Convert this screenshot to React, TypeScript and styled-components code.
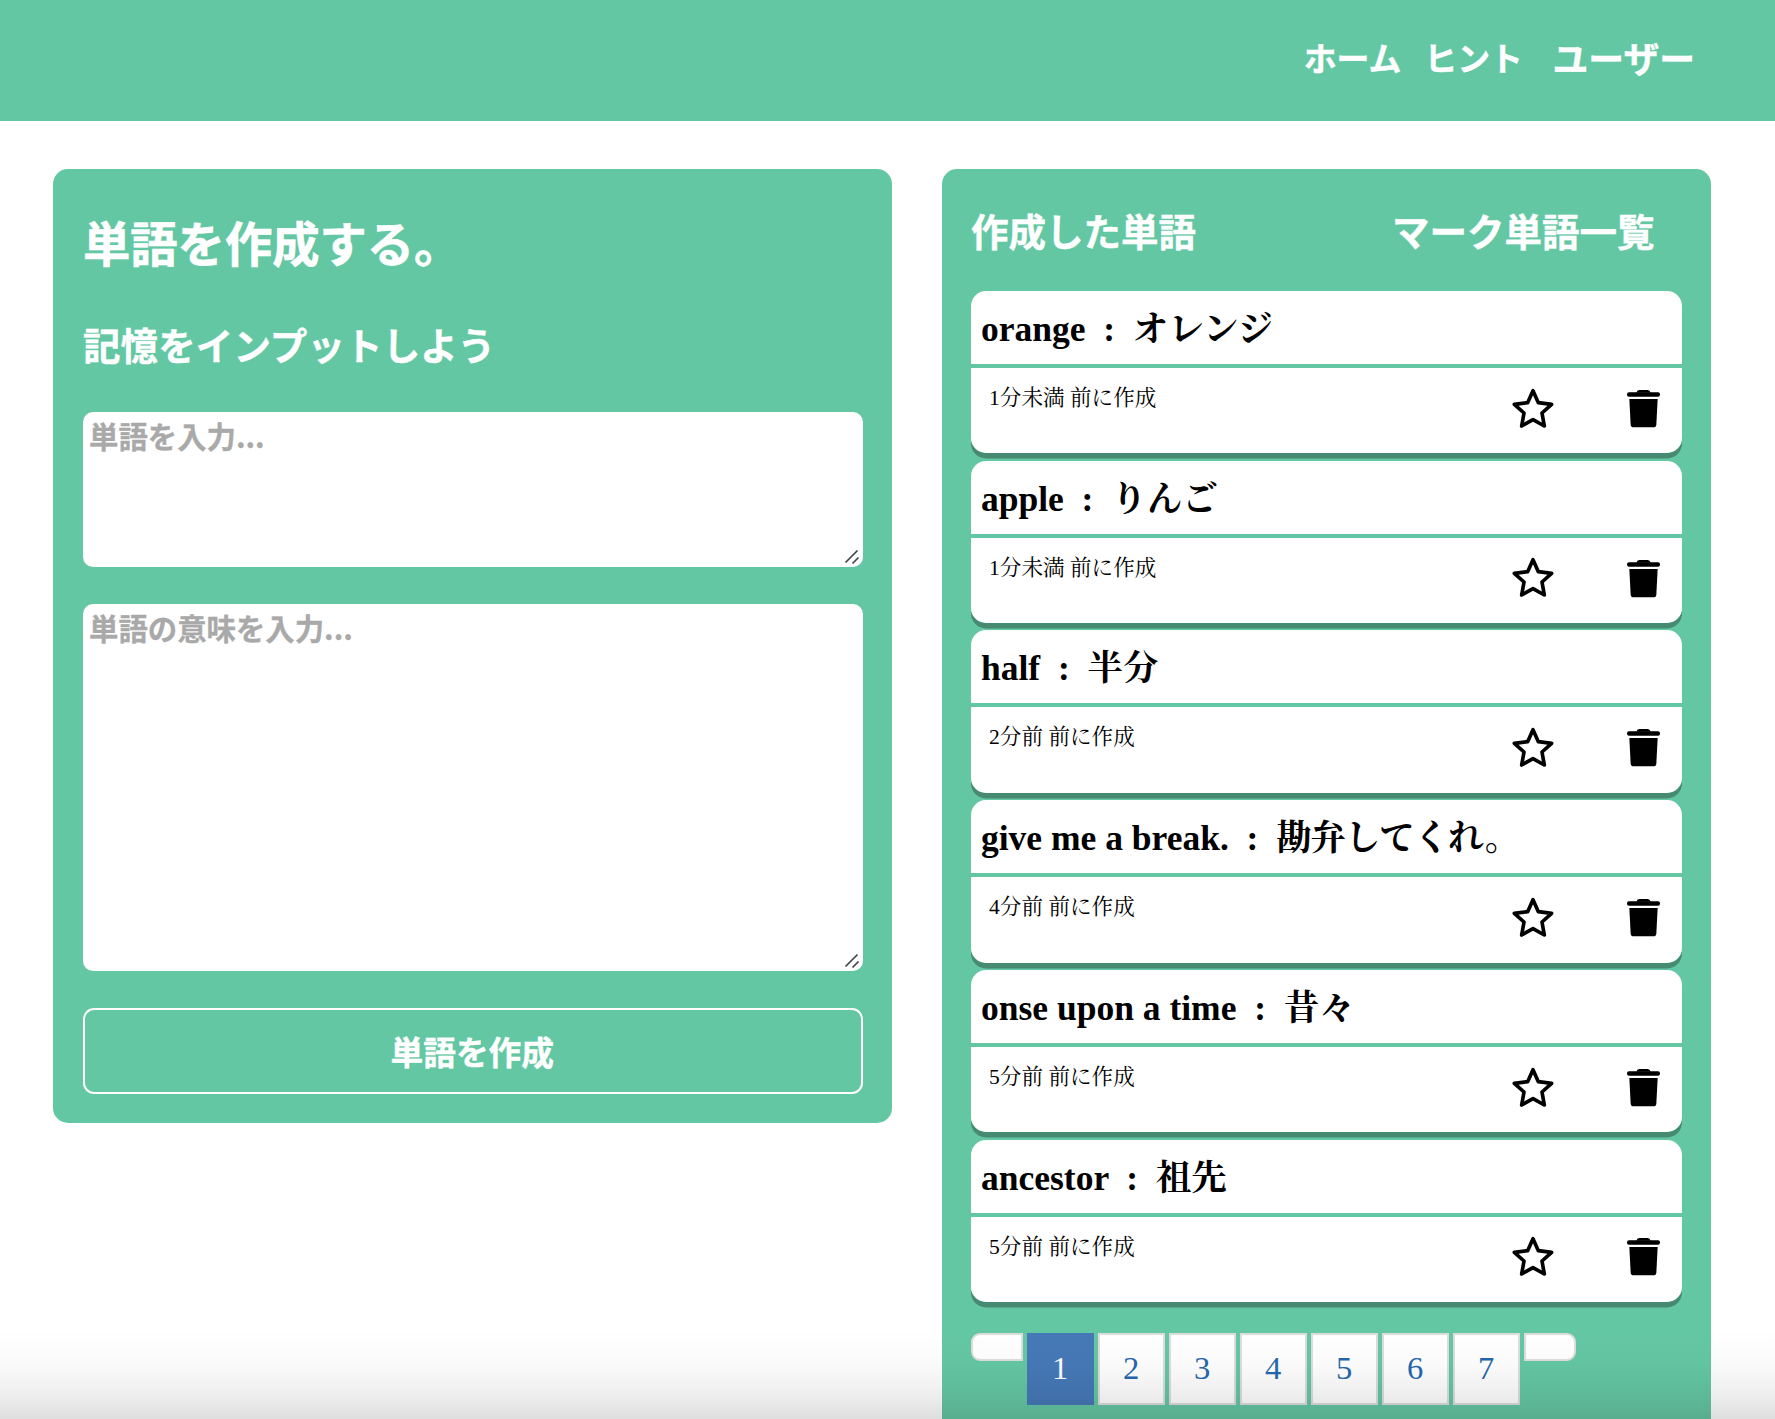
import React from "react";
import styled, { createGlobalStyle } from "styled-components";

const green = "#64c7a4";
const sans = `"Noto Sans CJK JP", "Hiragino Sans", sans-serif`;
const serif = `"Liberation Serif", "Noto Serif CJK JP", "Noto Sans CJK JP", serif`;

const GlobalStyle = createGlobalStyle`
  *, *::before, *::after { box-sizing: border-box; }
  body { margin: 0; background: #fff; font-family: ${serif}; color: #000; }
  h1, h2, p { margin: 0; }
`;

const Page = styled.div`
  position: relative;
  height: 1419px;
  overflow: hidden;
`;

const Header = styled.header`
  display: flex;
  justify-content: flex-end;
  height: 121px;
  padding: 32px 80px 0 0;
  background: ${green};
`;

const NavLink = styled.a<{ $size: number; $gap: number }>`
  margin-left: ${(p) => p.$gap}px;
  font: 700 ${(p) => p.$size}px/50px ${sans};
  color: #fff;
  -webkit-text-stroke: 0.4px #fff;
  white-space: nowrap;
`;

const Main = styled.main`
  display: flex;
  align-items: flex-start;
  gap: 50px;
  padding: 48px 64px 0 53px;
`;

const CreatePanel = styled.section`
  width: 839px;
  height: 954px;
  padding: 43px 29.5px 0 30px;
  border-radius: 15px;
  background: ${green};
  color: #fff;
`;

const Title = styled.h1`
  font: 700 47.3px/60px ${sans};
  -webkit-text-stroke: 0.6px #fff;
`;

const Subtitle = styled.h2`
  margin-top: 42px;
  font: 700 37.5px/60px ${sans};
  letter-spacing: 0.1px;
  -webkit-text-stroke: 0.4px #fff;
`;

const Field = styled.div<{ $height: number; $top: number }>`
  position: relative;
  height: ${(p) => p.$height}px;
  margin-top: ${(p) => p.$top}px;
`;

const Input = styled.textarea`
  display: block;
  width: 100%;
  height: 100%;
  padding: 3px 6px;
  border: 0;
  border-radius: 10px;
  background: #fff;
  resize: none;
  font: 700 29.4px/40px ${sans};
  &::placeholder {
    color: #a9a9a9;
    opacity: 1;
    -webkit-text-stroke: 0.3px #a9a9a9;
  }
`;

const Grip = styled.svg`
  position: absolute;
  right: 3px;
  bottom: 2px;
`;

const SubmitButton = styled.button`
  display: block;
  width: 100%;
  height: 86px;
  margin-top: 37px;
  padding: 0 1px 1px 0;
  border: 2px solid #fff;
  border-radius: 11px;
  background: transparent;
  color: #fff;
  font: 700 32.7px/40px ${sans};
  -webkit-text-stroke: 0.4px #fff;
`;

const ListPanel = styled.section`
  width: 769px;
  height: 1400px;
  padding: 31px 29px 0;
  border-radius: 15px;
  background: ${green};
`;

const ListHead = styled.div`
  display: flex;
  justify-content: space-between;
  height: 91px;
  padding-right: 27.5px;
  color: #fff;
`;

const ListTitle = styled.h2`
  font: 700 37.5px/60px ${sans};
  -webkit-text-stroke: 0.4px #fff;
`;

const Cards = styled.div`
  display: flex;
  flex-direction: column;
  gap: 7.4px;
`;

const Card = styled.article`
  height: 162.35px;
  overflow: hidden;
  border-radius: 15px;
  background: #fff;
`;

const CardShadow = styled.div`
  border-radius: 15px;
  box-shadow: 0 5.5px 0 #478a72;
`;

const Word = styled.h2`
  height: 77px;
  padding: 18px 0 0 10px;
  border-bottom: 4px solid ${green};
  font: 700 35.5px/40px ${serif};
  white-space: pre;
`;

const Meaning = styled.span<{ $spacing?: number }>`
  letter-spacing: ${(p) => p.$spacing ?? 0}px;
`;

const Meta = styled.div`
  display: flex;
  align-items: flex-start;
  padding: 18px 21px 0 18px;
`;

const Created = styled.p`
  flex: 1;
  font: 400 21.6px/25px ${serif};
`;

const StarSvg = styled.svg`
  width: 42px;
  height: 40.67px;
  margin: 1.6px 72px 0 0;
`;

const TrashSvg = styled.svg`
  width: 35px;
  height: 40px;
  margin-top: 2.8px;
`;

const Pagination = styled.nav`
  display: flex;
  align-items: flex-start;
  gap: 3.5px;
  margin-top: 31px;
`;

const PageLink = styled.a<{ $active?: boolean }>`
  width: 67.5px;
  height: 72px;
  border: 2px solid ${(p) => (p.$active ? "#4679b7" : "#ddd")};
  background: ${(p) => (p.$active ? "#4679b7" : "#fff")};
  color: ${(p) => (p.$active ? "#fff" : "#2567ae")};
  font: 400 32.6px/67px ${serif};
  text-align: center;
`;

const PageEdge = styled.span<{ $side: "left" | "right" }>`
  width: 52px;
  height: 28px;
  border: 2px solid #ddd;
  border-radius: ${(p) => (p.$side === "left" ? "9px 0 0 9px" : "0 9px 9px 0")};
  background: #fff;
`;

const BottomShade = styled.div`
  position: absolute;
  inset: auto 0 0;
  height: 90px;
  background: linear-gradient(rgba(0, 0, 0, 0), rgba(0, 0, 0, 0.02) 40%, rgba(0, 0, 0, 0.07) 75%, rgba(0, 0, 0, 0.13));
  pointer-events: none;
`;

const StarIcon = () => (
  <StarSvg viewBox="0 0 126 122" fill="none" stroke="#000" strokeWidth="11" strokeLinejoin="round">
    <path d="M63 8 79 44 119 49 90 75 97 114 63 95 29 114 36 75 7 49 47 44Z" />
  </StarSvg>
);

const TrashIcon = () => (
  <TrashSvg viewBox="0 0 105 120">
    <path d="M31 11Q33 3 40 3H65Q72 3 74 11Z" />
    <rect x="3" y="10" width="99" height="13" rx="6" />
    <path d="M10 30H95L91 107Q90 115 82 115H23Q15 115 14 107Z" />
  </TrashSvg>
);

const ResizeGrip = () => (
  <Grip width="16" height="16" stroke="#444" strokeWidth="1.7" fill="none">
    <path d="M1.5 13.5 13.5 1.5M8.5 14.5 14.5 8.5" />
  </Grip>
);

const words = [
  { word: "orange", meaning: "オレンジ", created: "1分未満" },
  { word: "apple", meaning: "りんご", created: "1分未満" },
  { word: "half", meaning: "半分", created: "2分前" },
  { word: "give me a break.", meaning: "勘弁してくれ。", created: "4分前", spacing: -1.1 },
  { word: "onse upon a time", meaning: "昔々", created: "5分前" },
  { word: "ancestor", meaning: "祖先", created: "5分前" },
];

export default function App() {
  return (
    <Page>
      <GlobalStyle />
      <Header>
        <NavLink $size={32.9} $gap={0}>ホーム</NavLink>
        <NavLink $size={32.9} $gap={23}>ヒント</NavLink>
        <NavLink $size={35.8} $gap={29.5}>ユーザー</NavLink>
      </Header>
      <Main>
        <CreatePanel>
          <Title>単語を作成する。</Title>
          <Subtitle>記憶をインプットしよう</Subtitle>
          <Field $height={154.5} $top={38}>
            <Input placeholder="単語を入力..." />
            <ResizeGrip />
          </Field>
          <Field $height={367} $top={37.5}>
            <Input placeholder="単語の意味を入力..." />
            <ResizeGrip />
          </Field>
          <SubmitButton>単語を作成</SubmitButton>
        </CreatePanel>
        <ListPanel>
          <ListHead>
            <ListTitle>作成した単語</ListTitle>
            <ListTitle>マーク単語一覧</ListTitle>
          </ListHead>
          <Cards>
            {words.map((w) => (
              <CardShadow key={w.word}>
                <Card>
                  <Word>
                    {`${w.word}  :  `}
                    <Meaning $spacing={w.spacing}>{w.meaning}</Meaning>
                  </Word>
                  <Meta>
                    <Created>{w.created} 前に作成</Created>
                    <StarIcon />
                    <TrashIcon />
                  </Meta>
                </Card>
              </CardShadow>
            ))}
          </Cards>
          <Pagination>
            <PageEdge $side="left" />
            {[1, 2, 3, 4, 5, 6, 7].map((n) => (
              <PageLink key={n} $active={n === 1}>{n}</PageLink>
            ))}
            <PageEdge $side="right" />
          </Pagination>
        </ListPanel>
      </Main>
      <BottomShade />
    </Page>
  );
}
